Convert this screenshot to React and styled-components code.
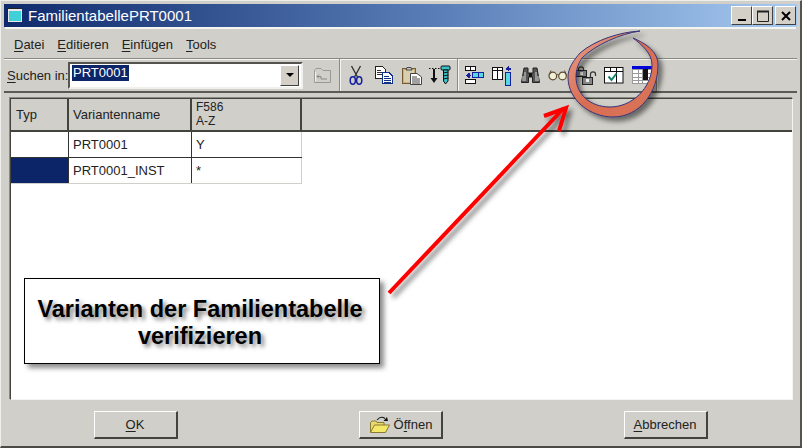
import React from "react";
import styled, { createGlobalStyle } from "styled-components";

const Global = createGlobalStyle`
  html, body { margin: 0; padding: 0; background: #d4d0c8; overflow: hidden; }
  * { box-sizing: border-box; }
  u { text-underline-offset: 2px; text-decoration-thickness: 1px; }
`;

const Dialog = styled.div`
  position: relative;
  width: 802px;
  height: 448px;
  padding: 4px 4px 2px;
  display: flex;
  flex-direction: column;
  background: #d0cfc9;
  color: #222;
  font: 12px "Liberation Sans", Arial, sans-serif;
  border-top: 1px solid #eeeeea;
  border-left: 1px solid #eeeeea;
  border-right: 2px solid #55554f;
  border-bottom: 2px solid #4a4a46;
`;

const TitleBar = styled.div`
  height: 23px;
  flex: none;
  margin: -1px -1px 0 -1px;
  display: flex;
  align-items: center;
  padding: 0 1px 0 3px;
  background: linear-gradient(90deg, #0f2a6c 0%, #5a7fb8 55%, #a6caf0 100%);
`;

const TitleText = styled.span`
  margin-left: 5px;
  color: #fff;
  font-size: 15px;
  flex: 1;
`;

const WinButtons = styled.div`
  display: flex;
`;

const WinButton = styled.div`
  width: 21px;
  height: 19px;
  margin-left: ${p => (p.$gap ? "2px" : "0")};
  background: #d4d0c8;
  border: 1px solid;
  border-color: #fff #404040 #404040 #fff;
  display: flex;
  align-items: center;
  justify-content: center;
`;

const MenuBar = styled.div`
  height: 31px;
  flex: none;
  display: flex;
  align-items: center;
  gap: 13px;
  padding: 2px 0 0 9px;
  border-top: 2px solid #f4f4f0;
  font-size: 13px;
`;

const MenuItem = styled.span``;

const ToolBar = styled.div`
  height: 35px;
  flex: none;
  margin: 0 -1px;
  display: flex;
  align-items: center;
  border-top: 1px solid #8a8a84;
  border-bottom: 2px solid #5a5a56;
  box-shadow: inset 0 1px 0 #f4f4f0;
  padding: 0 0 0 3px;
`;

const SearchLabel = styled.label`
  font-size: 13px;
  width: 61px;
  flex: none;
  white-space: nowrap;
`;

const Combo = styled.div`
  width: 235px;
  height: 27px;
  flex: none;
  display: flex;
  background: #fff;
  border: 2px solid;
  border-color: #55554f #f0f0ec #f0f0ec #55554f;
  padding: 1px 2px 1px 2px;
`;

const ComboValue = styled.div`
  flex: 1;
  font-size: 13px;
  line-height: 15px;
  color: #fff;
  span { background: #0c2468; display: inline-block; height: 16px; padding: 0 1px; }
`;

const ComboArrow = styled.div`
  width: 19px;
  background: #d4d0c8;
  border: 1px solid;
  border-color: #fff #404040 #404040 #fff;
  display: flex;
  align-items: center;
  justify-content: center;
  &::after {
    content: "";
    border-top: 4px solid #000;
    border-left: 4px solid transparent;
    border-right: 4px solid transparent;
  }
`;

const FolderSlot = styled.div`
  width: 34px;
  flex: none;
  margin-left: 2px;
  display: flex;
  justify-content: center;
`;

const Divider = styled.div`
  width: 2px;
  height: 32px;
  flex: none;
  margin: ${p => p.$m || "0"};
  background: #8c8c86;
  border-right: 1px solid #f4f4f0;
`;

const IconGroup = styled.div`
  display: flex;
  flex: none;
  padding-left: 1px;
`;

const IconSlot = styled.div`
  width: 28px;
  height: 24px;
  display: flex;
  align-items: center;
  justify-content: center;
`;

const Sunken = styled.div`
  flex: none;
  height: 302px;
  margin: 5px 0 0 5px;
  width: 783px;
  background: #fff;
  border: 1px solid;
  border-color: #44443f #f4f4f0 #f4f4f0 #44443f;
  box-shadow: -1px -1px 0 #8a8a84;
  position: relative;
`;

const HeaderRow = styled.div`
  display: grid;
  grid-template-columns: 58px 123px 110px 1fr;
  height: 33px;
  background: #d0cfc9;
  border-bottom: 2px solid #44443f;
`;

const HeaderCell = styled.div`
  border-right: 2px solid #44443f;
  display: flex;
  flex-direction: column;
  justify-content: ${p => (p.$top ? "flex-start" : "center")};
  padding-left: ${p => p.$pad || 4}px;
  font-size: ${p => (p.$top ? 12 : 13)}px;
  line-height: 14px;
  padding-top: ${p => (p.$top ? "1px" : "0")};
  &:last-child { border-right: 0; }
`;

const BodyRow = styled.div`
  display: grid;
  grid-template-columns: 58px 123px 110px;
  height: 26px;
  border-bottom: 1px solid ${p => (p.$last ? "#d0cfc9" : "#333")};
  width: 291px;
`;

const RowHead = styled.div`
  background: ${p => (p.$selected ? "#0c2468" : "#fff")};
  border-right: 1px solid #333;
`;

const BodyCell = styled.div`
  padding-left: 4px;
  font-size: 13px;
  line-height: 25px;
  border-right: 1px solid ${p => (p.$light ? "#d0cfc9" : "#333")};
`;

const Footer = styled.div`
  flex: 1;
  display: flex;
  justify-content: center;
  align-items: flex-start;
  gap: 181px;
  padding-top: 11px;
`;

const PushButton = styled.button`
  width: 84px;
  height: 28px;
  padding: 0;
  display: flex;
  align-items: center;
  justify-content: center;
  gap: ${p => (p.$icon ? "4px" : "0")};
  padding-left: ${p => (p.$icon ? "2px" : "0")};
  background: #d0cfc9;
  color: #222;
  font: 13px "Liberation Sans", Arial, sans-serif;
  border: 1px solid;
  border-color: #fff #44443f #44443f #fff;
  border-bottom-width: 2px;
  border-right-width: 2px;
`;

const Callout = styled.div`
  position: absolute;
  left: 23px;
  top: 277px;
  width: 356px;
  height: 86px;
  padding: 4px 4px 0 0;
  background: #fff;
  border: 1px solid #000;
  box-shadow: 4px 4px 5px rgba(0, 0, 0, 0.45);
  display: flex;
  align-items: center;
  justify-content: center;
  text-align: center;
  color: #000;
  font: bold 23.5px/27px "Liberation Sans", Arial, sans-serif;
  text-shadow: 3px 3px 4px rgba(0, 0, 0, 0.5);
`;

const Overlay = styled.svg`
  position: absolute;
  left: -1px;
  top: -1px;
  overflow: visible;
  pointer-events: none;
`;

const Ic = ({ w = 20, h = 20, children }) => (
  <svg width={w} height={h} viewBox={`0 0 ${w} ${h}`} shapeRendering="crispEdges">{children}</svg>
);

const Folder = () => (
  <svg width="19" height="17" viewBox="0 0 19 17">
    <path d="M1.5 15.5V3.5L3 1.5H8L10 3.5H17.5V15.5Z" fill="#d0cfc9" stroke="#9a9a94" />
    <path d="M2.5 14.5V5" stroke="#f4f4f0" fill="none" />
    <path d="M6 7.5L4 9.5L6 11.5M4 9.5H8V12H14" stroke="#8a8a84" fill="none" />
  </svg>
);

const Scissors = () => (
  <svg width="14" height="20" viewBox="0 0 14 20">
    <path d="M2.5 1L8.5 12M11.5 1L5.5 12" stroke="#333" strokeWidth="1.4" fill="none" />
    <ellipse cx="3.8" cy="15.5" rx="2.6" ry="3.7" fill="none" stroke="#1420a0" strokeWidth="1.5" />
    <ellipse cx="10.2" cy="15.5" rx="2.6" ry="3.7" fill="none" stroke="#1420a0" strokeWidth="1.5" />
  </svg>
);

const CopyIcon = () => (
  <Ic w={18} h={18}>
    <path d="M.5.5H7.5L10.5 3.5V12.5H.5Z" fill="#fff" stroke="#222" />
    <path d="M2 4H6M2 6H8M2 8H8" stroke="#333" />
    <path d="M7.5 6.5H14L17.5 10V17.5H7.5Z" fill="#fff" stroke="#10308a" />
    <path d="M9 10H14M9 12H16M9 14H16M9 16H16" stroke="#10308a" />
  </Ic>
);

const PasteIcon = () => (
  <svg width="20" height="19" viewBox="0 0 20 19">
    <rect x=".5" y="2.5" width="13" height="15" fill="#c8b37c" stroke="#7a5a2c" />
    <rect x="2" y="4" width="10" height="12" fill="#d8ceb0" />
    <path d="M4 4L5 1.5H9L10 4Z" fill="#ccc" stroke="#444" />
    <path d="M8.5 7.5H15L19.5 11V18.5H8.5Z" fill="#fff" stroke="#444" />
    <path d="M10 11H15M10 13H18M10 15H18M10 17H18" stroke="#444" />
  </svg>
);

const ThreadIcon = () => (
  <svg width="22" height="20" viewBox="0 0 22 20">
    <path d="M0 3.5H12" stroke="#111" strokeDasharray="1.5 1.5" />
    <path d="M5 4V14" stroke="#111" strokeWidth="2" />
    <path d="M1.5 13H8.5L5 18Z" fill="#111" />
    <rect x="12" y="1" width="9" height="4" rx="1" fill="#35c4cc" stroke="#111" />
    <path d="M14.5 5H19V16L16.5 19L14.5 16Z" fill="#35c4cc" stroke="#111" />
    <path d="M14 8L19.5 7M14 11L19.5 10M14 14L19.5 13" stroke="#111" />
  </svg>
);

const ColumnMove = () => (
  <Ic w={19} h={18}>
    <rect x=".5" y=".5" width="10" height="4" fill="#fff" stroke="#111" />
    <path d="M5.5 .5V4.5M5.5 13.5V17.5" stroke="#111" />
    <rect x=".5" y="13.5" width="10" height="4" fill="#fff" stroke="#111" />
    <rect x="7.5" y="6.5" width="11" height="5" fill="#55d8e0" stroke="#1420a0" />
    <path d="M13 6.5V11.5" stroke="#1420a0" />
    <path d="M1 9H6M3 7H4V11H3M2 8H3V10H2" stroke="#1420a0" />
  </Ic>
);

const RowMove = () => (
  <Ic w={20} h={21}>
    <rect x=".5" y="2.5" width="10" height="12" fill="#fff" stroke="#111" />
    <path d="M5.5 2.5V14.5M.5 5.5H10.5" stroke="#111" />
    <rect x="13.5" y="7.5" width="5" height="13" fill="#55d8e0" stroke="#1420a0" />
    <path d="M16 1V6M14 3H18V4H14M15 2H17" stroke="#1420a0" />
  </Ic>
);

const Binoculars = () => (
  <svg width="19" height="17" viewBox="0 0 19 17">
    <path d="M3 1H7V6H12V1H16L18.5 15.5H11.5V10H7.5V15.5H.5Z" fill="#555" stroke="#222" />
    <path d="M2 9V14M4 5V14M15 5V14M17 9V14" stroke="#d8d8d4" />
    <rect x="8" y="6" width="3" height="4" fill="#111" />
  </svg>
);

const Glasses = () => (
  <svg width="20" height="12" viewBox="0 0 20 12">
    <circle cx="4.8" cy="7" r="3.8" fill="#f4f0d8" stroke="#5a4a30" strokeWidth="1.2" />
    <circle cx="14.5" cy="7" r="3.8" fill="#f4f0d8" stroke="#5a4a30" strokeWidth="1.2" />
    <path d="M8.5 6Q9.6 5 10.8 6M1 6L3 1.5M18.5 6L16.5 1.5" stroke="#5a4a30" fill="none" />
  </svg>
);

const Locks = () => (
  <svg width="21" height="19" viewBox="0 0 21 19">
    <path d="M2.5 5V3Q2.5 .8 5 .8T7.5 3V5" fill="none" stroke="#333" strokeWidth="1.2" />
    <rect x=".5" y="4.5" width="10" height="6" fill="#888" stroke="#222" />
    <rect x="4" y="6" width="3" height="3" fill="#eee" />
    <path d="M14.5 11V8Q14.5 5.8 17 5.8T19.5 8V10" fill="none" stroke="#333" strokeWidth="1.2" />
    <rect x="6.5" y="11.5" width="10" height="7" fill="#888" stroke="#222" />
    <rect x="10" y="13" width="3" height="3" fill="#eee" />
  </svg>
);

const CheckTable = () => (
  <svg width="20" height="17" viewBox="0 0 20 17">
    <rect x=".5" y=".5" width="18.5" height="15.5" fill="#fff" stroke="#111" />
    <path d="M.5 4.5H19M6.5 .5V4.5M12.5 .5V16" stroke="#111" />
    <path d="M4.5 9.5L7.5 13L12.5 6.5" fill="none" stroke="#14806a" strokeWidth="2" />
  </svg>
);

const BlueTable = () => (
  <Ic w={20} h={18}>
    <rect x="0" y="0" width="20" height="3" fill="#0000d8" />
    <rect x=".5" y="3.5" width="19" height="14" fill="#fff" stroke="#999" />
    <path d="M6.5 3.5V17.5M10.5 3.5V17.5M.5 7.5H20M.5 11.5H20M.5 14.5H20" stroke="#999" />
    <rect x="11" y="3" width="5" height="11" fill="#111" />
  </Ic>
);

const OpenIcon = () => (
  <svg width="20" height="17" viewBox="0 0 20 17">
    <path d="M.5 16V6.5L2 5H6L7 6.5H14V9" fill="#e8d870" stroke="#8a7a30" />
    <path d="M.5 16.5L4.5 9H19.5L15.5 16.5Z" fill="#f4e868" stroke="#8a7a30" />
    <path d="M7 4Q11 -.5 15 2.5" fill="none" stroke="#111" strokeWidth="1.1" />
    <path d="M13.5 5H18L17 1Z" fill="#111" />
  </svg>
);

const Annotations = () => (
  <Overlay width="802" height="448" viewBox="0 0 802 448">
    <defs>
      <filter id="soft" x="-20%" y="-20%" width="150%" height="150%">
        <feDropShadow dx="4" dy="4" stdDeviation="2.5" floodColor="#000" floodOpacity="0.5" />
      </filter>
      <linearGradient id="ring" x1="0" y1="0" x2="1" y2="1">
        <stop offset="0" stopColor="#e9a48e" />
        <stop offset="0.5" stopColor="#d96d52" />
        <stop offset="1" stopColor="#d8755a" />
      </linearGradient>
    </defs>
    <g filter="url(#soft)">
      <path
        d="M640 31C620 32 595 40 580 53C574 60 568 68 568 77C568 100 590 117 613 117C640 117 658 92 658 65C658 52 647 44 633 38C642 45 652 53 652 65C652 88 632 107 610 107C590 107 576 94 576 77C576 70 578 64 582 58C595 45 620 34 640 31Z"
        fill="url(#ring)"
        stroke="#34347c"
        strokeWidth="1"
      />
    </g>
    <g filter="url(#soft)" stroke="#f00" fill="none" strokeWidth="4">
      <path d="M389 293L564 108" />
      <path d="M544 116L566 108L559 131" />
    </g>
  </Overlay>
);

export default function App() {
  return (
    <>
      <Global />
      <Dialog>
        <TitleBar>
          <svg width="16" height="15" viewBox="0 0 16 15">
            <rect x="0" y="0" width="15" height="14" fill="#222" />
            <rect x="1" y="1" width="14" height="13" fill="#e8e8e8" />
            <rect x="2" y="3" width="12" height="10" fill="#40d0d8" />
          </svg>
          <TitleText>FamilientabellePRT0001</TitleText>
          <WinButtons>
            <WinButton>
              <svg width="10" height="10" viewBox="0 0 10 10"><rect x="1" y="8" width="8" height="2" fill="#000" /></svg>
            </WinButton>
            <WinButton>
              <svg width="12" height="12" viewBox="0 0 12 12"><path d="M.5 1.5H11.5V11.5H.5Z" fill="none" stroke="#222" /><path d="M0 1.5H12" stroke="#222" strokeWidth="2" /></svg>
            </WinButton>
            <WinButton $gap>
              <svg width="10" height="10" viewBox="0 0 10 10"><path d="M1 1L9 9M9 1L1 9" stroke="#000" strokeWidth="2" /></svg>
            </WinButton>
          </WinButtons>
        </TitleBar>
        <MenuBar>
          <MenuItem><u>D</u>atei</MenuItem>
          <MenuItem><u>E</u>ditieren</MenuItem>
          <MenuItem><u>E</u>infügen</MenuItem>
          <MenuItem><u>T</u>ools</MenuItem>
        </MenuBar>
        <ToolBar>
          <SearchLabel><u>S</u>uchen in:</SearchLabel>
          <Combo>
            <ComboValue><span>PRT0001</span></ComboValue>
            <ComboArrow />
          </Combo>
          <FolderSlot><Folder /></FolderSlot>
          <Divider />
          <IconGroup>
            <IconSlot><Scissors /></IconSlot>
            <IconSlot><CopyIcon /></IconSlot>
            <IconSlot><PasteIcon /></IconSlot>
            <IconSlot><ThreadIcon /></IconSlot>
          </IconGroup>
          <Divider $m="0 0 0 3px" />
          <IconGroup>
            <IconSlot><ColumnMove /></IconSlot>
            <IconSlot><RowMove /></IconSlot>
            <IconSlot><Binoculars /></IconSlot>
            <IconSlot><Glasses /></IconSlot>
            <IconSlot><Locks /></IconSlot>
            <IconSlot><CheckTable /></IconSlot>
            <IconSlot><BlueTable /></IconSlot>
          </IconGroup>
          <Divider />
        </ToolBar>
        <Sunken>
          <HeaderRow>
            <HeaderCell $pad={5}>Typ</HeaderCell>
            <HeaderCell>Variantenname</HeaderCell>
            <HeaderCell $top><span>F586</span><span>A-Z</span></HeaderCell>
            <HeaderCell />
          </HeaderRow>
          <BodyRow>
            <RowHead />
            <BodyCell>PRT0001</BodyCell>
            <BodyCell $light>Y</BodyCell>
          </BodyRow>
          <BodyRow $last>
            <RowHead $selected />
            <BodyCell>PRT0001_INST</BodyCell>
            <BodyCell $light>*</BodyCell>
          </BodyRow>
        </Sunken>
        <Footer>
          <PushButton><span><u>O</u>K</span></PushButton>
          <PushButton $icon><OpenIcon /><span>Ö<u>f</u>fnen</span></PushButton>
          <PushButton><span><u>A</u>bbrechen</span></PushButton>
        </Footer>
        <Callout>Varianten der Familientabelle<br />verifizieren</Callout>
        <Annotations />
      </Dialog>
    </>
  );
}
